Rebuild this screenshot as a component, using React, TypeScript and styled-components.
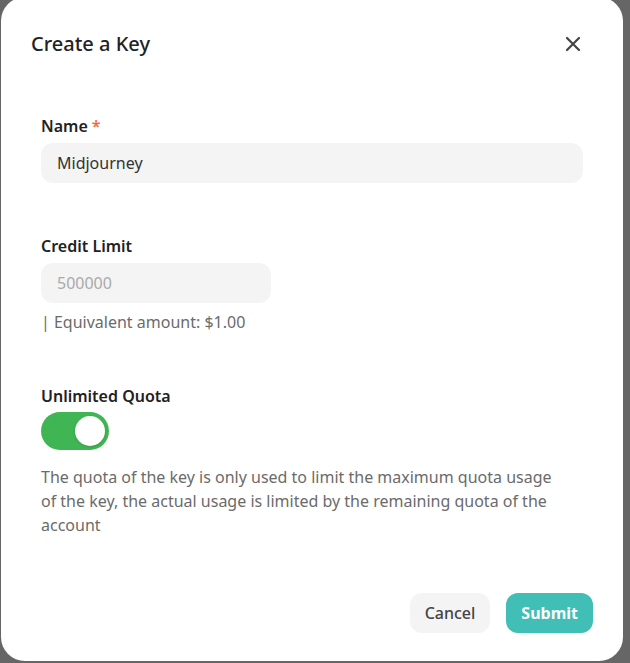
import React from "react";
import styled, { createGlobalStyle } from "styled-components";

const Global = createGlobalStyle`
  html, body { margin: 0; padding: 0; background: #666666; }
  body { font-family: "Noto Sans", "Open Sans", sans-serif; width: 630px; height: 663px; overflow: hidden; }
`;

const Modal = styled.div`
  box-sizing: border-box;
  margin: -3px 0 0 1px;
  width: 622px;
  height: 664px;
  background: #fff;
  border-radius: 24px;
  padding: 33px 30px 0 30px;
  display: flex;
  flex-direction: column;
`;

const Header = styled.div`
  display: flex;
  align-items: center;
  justify-content: space-between;
  height: 28px;
`;

const Title = styled.h2`
  margin: 0;
  font-size: 20px;
  font-weight: 500;
  color: #222;
  line-height: 28px;
`;

const CloseBtn = styled.button`
  border: 0;
  background: none;
  padding: 0;
  margin-right: 11px;
  width: 18px;
  height: 18px;
  display: flex;
  color: #444;
`;

const Body = styled.div`
  padding: 0 10px;
  display: flex;
  flex-direction: column;
`;

const Field = styled.div<{ $mt: number }>`
  margin-top: ${(p) => p.$mt}px;
  display: flex;
  flex-direction: column;
`;

const Label = styled.div`
  font-size: 16px;
  font-weight: 600;
  color: #222;
  line-height: 24px;
`;

const Star = styled.span`
  color: #f06a4a;
  margin-left: 4px;
`;

const Input = styled.input<{ $w?: number }>`
  box-sizing: border-box;
  margin-top: 5px;
  height: 40px;
  width: ${(p) => (p.$w ? `${p.$w}px` : "100%")};
  border: 0;
  border-radius: 12px;
  background: #f4f4f4;
  padding: 0 16px;
  font: inherit;
  font-size: 16px;
  color: #333;
  outline: none;
  &::placeholder { color: #aaa; }
`;

const Hint = styled.div<{ $mt: number }>`
  margin-top: ${(p) => p.$mt}px;
  max-width: 520px;
  font-size: 16px;
  line-height: 24px;
  color: #6b6b6b;
`;

const Switch = styled.div`
  margin-top: 4px;
  width: 68px;
  height: 38px;
  border-radius: 19px;
  background: #40b554;
  display: flex;
  align-items: center;
  justify-content: flex-end;
  padding-right: 4px;
  box-sizing: border-box;
`;

const Knob = styled.div`
  width: 30px;
  height: 30px;
  border-radius: 50%;
  background: #fff;
  box-shadow: 0 1px 3px rgba(0, 0, 0, 0.15);
`;

const Footer = styled.div`
  margin: 56px -10px 0 0;
  display: flex;
  justify-content: flex-end;
  gap: 16px;
`;

const Button = styled.button<{ $primary?: boolean }>`
  height: 40px;
  border: 0;
  border-radius: 12px;
  padding: 0 15px;
  font: inherit;
  font-size: 16px;
  font-weight: ${(p) => (p.$primary ? 700 : 500)};
  background: ${(p) => (p.$primary ? "#41beb5" : "#f4f4f4")};
  color: ${(p) => (p.$primary ? "#fff" : "#444")};
`;

export default function App() {
  return (
    <>
      <Global />
      <Modal>
        <Header>
          <Title>Create a Key</Title>
          <CloseBtn aria-label="close">
            <svg width="18" height="18" viewBox="0 0 18 18">
              <path d="M3 3 L15 15 M15 3 L3 15" stroke="#444" strokeWidth="2.2" strokeLinecap="round" />
            </svg>
          </CloseBtn>
        </Header>
        <Body>
          <Field $mt={56}>
            <Label>
              Name<Star>*</Star>
            </Label>
            <Input defaultValue="Midjourney" />
          </Field>
          <Field $mt={51}>
            <Label>Credit Limit</Label>
            <Input $w={230} placeholder="500000" />
            <Hint $mt={7}>| Equivalent amount: $1.00</Hint>
          </Field>
          <Field $mt={50}>
            <Label>Unlimited Quota</Label>
            <Switch>
              <Knob />
            </Switch>
            <Hint $mt={15}>
              The quota of the key is only used to limit the maximum quota usage of the key, the actual usage is limited by
              the remaining quota of the account
            </Hint>
          </Field>
          <Footer>
            <Button>Cancel</Button>
            <Button $primary>Submit</Button>
          </Footer>
        </Body>
      </Modal>
    </>
  );
}
